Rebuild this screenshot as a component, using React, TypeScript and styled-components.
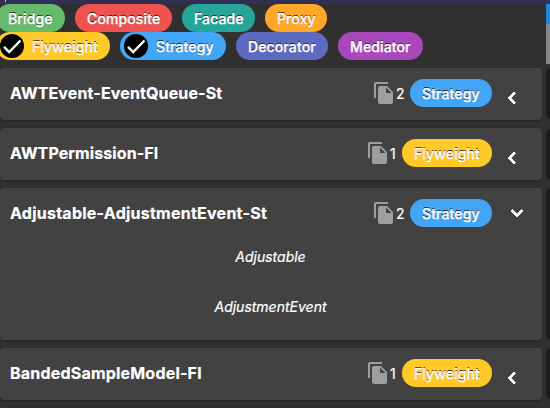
import React from "react";
import styled, { createGlobalStyle } from "styled-components";

const GlobalStyle = createGlobalStyle`
  * { box-sizing: border-box; }
  body {
    margin: 0;
    overflow: hidden;
    background: #303030;
    color: #fff;
    font-family: Inter, "Liberation Sans", sans-serif;
    font-size: 14px;
  }
`;

const Page = styled.div`
  width: 550px;
  height: 408px;
  overflow: hidden;
  display: flex;
  flex-direction: column;
  background: #303030;
`;

const TopBar = styled.div`
  flex: 0 0 4px;
  background: #303056;
  padding-left: 5px;
`;

const TopMark = styled.div`
  width: 1px;
  height: 2px;
  background: #c4c4d4;
`;

const Body = styled.div`
  flex: 1;
  display: flex;
  gap: 4px;
  min-height: 0;
`;

const Main = styled.main`
  width: 542px;
`;

const Filters = styled.div`
  margin-left: -4px;
  height: 56px;
`;

const FilterRow = styled.div`
  display: flex;
  gap: 10px;
`;

const Chip = styled.span<{ $color: string; $width: number; $checked?: boolean }>`
  display: flex;
  align-items: center;
  flex: none;
  width: ${(p) => p.$width}px;
  height: 28px;
  padding-left: ${(p) => (p.$checked ? 4 : 12)}px;
  gap: 8px;
  border-radius: 14px;
  background: ${(p) => p.$color};
`;

const ChipLabel = styled.span`
  font-weight: 500;
  line-height: 20px;
  white-space: nowrap;
  padding-top: 2px;
  letter-spacing: 0.12px;
  text-shadow: 0 -1px 0 #000;
  -webkit-text-stroke: 0.35px #fff;
`;

const CheckMark = styled.svg`
  width: 24px;
  height: 24px;
  flex: none;
`;

const CardList = styled.div`
  display: flex;
  flex-direction: column;
  gap: 8px;
  padding-top: 8px;
`;

const Card = styled.section<{ $open?: boolean }>`
  height: ${(p) => (p.$open ? 152 : 52)}px;
  border-radius: 4px;
  background: #424242;
  box-shadow: 0 1px 2px rgba(0, 0, 0, 0.32);
`;

const CardHeader = styled.header`
  display: flex;
  align-items: center;
  height: 50px;
  padding-left: 10px;
`;

const Title = styled.h2<{ $spacing: number }>`
  flex: 1;
  margin: 0;
  font-size: 16px;
  line-height: 24px;
  font-weight: 700;
  letter-spacing: ${(p) => p.$spacing}px;
  white-space: nowrap;
  -webkit-text-stroke: 0.2px #fff;
`;

const CopyIcon = styled.svg`
  width: 24px;
  height: 24px;
  fill: #9e9e9e;
`;

const Count = styled.span<{ $width: number }>`
  width: ${(p) => p.$width}px;
  padding-top: 2px;
  line-height: 20px;
  -webkit-text-stroke: 0.2px #fff;
`;

const Toggle = styled.svg<{ $open?: boolean }>`
  width: 24px;
  height: 24px;
  margin: ${(p) => (p.$open ? "0 13px 1px" : "9px 18px 0 8px")};
  fill: #fff;
  stroke: #fff;
  stroke-width: 0.9;
`;

const Members = styled.ul`
  margin: -1px 1px 0 0;
  padding: 0;
  list-style: none;
  text-align: center;
  font-style: italic;
  -webkit-text-stroke: 0.2px #fff;
`;

const Member = styled.li`
  height: 50px;
  line-height: 40px;
`;

const NextPane = styled.aside`
  width: 4px;
`;

const Tab = styled.div<{ $color: string; $height: number }>`
  height: ${(p) => p.$height}px;
  background: ${(p) => p.$color};
`;

const NextCards = styled.div`
  display: flex;
  flex-direction: column;
  gap: 10px;
  padding-top: 5px;
`;

const NextCard = styled.div<{ $height: number }>`
  height: ${(p) => p.$height}px;
  border-radius: 4px 0 0 4px;
  background: #1b1b1b;
`;

type Pattern = { name: string; color: string; width: number; checked?: boolean };

const rows: Pattern[][] = [
  [
    { name: "Bridge", color: "#66bb6a", width: 69 },
    { name: "Composite", color: "#ef5350", width: 97 },
    { name: "Facade", color: "#26a69a", width: 73 },
    { name: "Proxy", color: "#ffa726", width: 62 },
  ],
  [
    { name: "Flyweight", color: "#ffca28", width: 114, checked: true },
    { name: "Strategy", color: "#42a5f5", width: 106, checked: true },
    { name: "Decorator", color: "#5c6bc0", width: 92 },
    { name: "Mediator", color: "#ab47bc", width: 85 },
  ],
];

const cards = [
  { title: "AWTEvent-EventQueue-St", spacing: 0.14, count: 2, pattern: "Strategy" },
  { title: "AWTPermission-Fl", spacing: 0.1, count: 1, pattern: "Flyweight" },
  {
    title: "Adjustable-AdjustmentEvent-St",
    spacing: 0.25,
    count: 2,
    pattern: "Strategy",
    members: ["Adjustable", "AdjustmentEvent"],
  },
  { title: "BandedSampleModel-Fl", spacing: 0.2, count: 1, pattern: "Flyweight" },
];

function PatternChip({ name, color, width, checked }: Pattern) {
  return (
    <Chip $color={color} $width={width} $checked={checked}>
      {checked && (
        <CheckMark viewBox="0 0 24 24">
          <circle cx="12" cy="12" r="12" />
          <path d="M4 12.8 9.2 18 20.5 6.5" fill="none" stroke="#fff" strokeWidth="2.4" />
        </CheckMark>
      )}
      <ChipLabel>{name}</ChipLabel>
    </Chip>
  );
}

export default function App() {
  return (
    <>
      <GlobalStyle />
      <Page>
        <TopBar>
          <TopMark />
        </TopBar>
        <Body>
          <Main>
            <Filters>
              {rows.map((row, i) => (
                <FilterRow key={i}>
                  {row.map((p) => (
                    <PatternChip key={p.name} {...p} />
                  ))}
                </FilterRow>
              ))}
            </Filters>
            <CardList>
              {cards.map((c) => {
                const strategy = c.pattern === "Strategy";
                const open = !!c.members;
                return (
                  <Card key={c.title} $open={open}>
                    <CardHeader>
                      <Title $spacing={c.spacing}>{c.title}</Title>
                      <CopyIcon viewBox="0 0 24 24">
                        <path d="M16 1H4c-1.1 0-2 .9-2 2v14h2V3h12V1z" />
                        <path d="M15 5l6 6v10c0 1.1-.9 2-2 2H8c-1.1 0-2-.9-2-2V7c0-1.1.9-2 2-2h7zM14 12h5.5L14 6.5V12z" fillRule="evenodd" />
                      </CopyIcon>
                      <Count $width={strategy ? 14 : 12}>{c.count}</Count>
                      <PatternChip
                        name={c.pattern}
                        color={strategy ? "#42a5f5" : "#ffca28"}
                        width={strategy ? 82 : 90}
                      />
                      <Toggle $open={open} viewBox="0 0 24 24">
                        <path
                          d={
                            open
                              ? "M16.59 8.59L12 13.17 7.41 8.59 6 10l6 6 6-6z"
                              : "M15.41 7.41L14 6l-6 6 6 6 1.41-1.41L10.83 12z"
                          }
                        />
                      </Toggle>
                    </CardHeader>
                    {c.members && (
                      <Members>
                        {c.members.map((m) => (
                          <Member key={m}>{m}</Member>
                        ))}
                      </Members>
                    )}
                  </Card>
                );
              })}
            </CardList>
          </Main>
          <NextPane>
            <Tab $color="#1e88e5" $height={20} />
            <Tab $color="#858585" $height={40} />
            <NextCards>
              <NextCard $height={50} />
              <NextCard $height={50} />
              <NextCard $height={150} />
              <NextCard $height={50} />
            </NextCards>
          </NextPane>
        </Body>
      </Page>
    </>
  );
}
